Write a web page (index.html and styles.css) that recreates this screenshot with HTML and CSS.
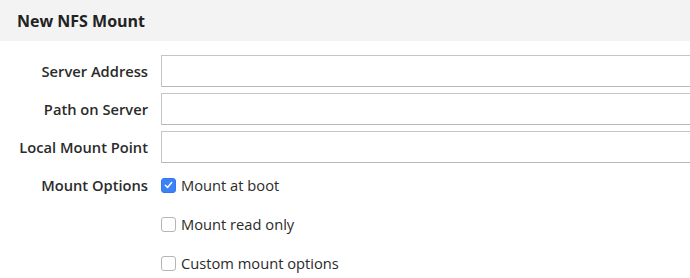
FILE: index.html
```html
<!DOCTYPE html>
<html lang="en">
<head>
    <meta charset="UTF-8">
    <meta name="viewport" content="width=device-width, initial-scale=1.0">
    <title>New NFS Mount</title>
    <link rel="stylesheet" href="styles.css">
</head>
<body>
    <header class="dialog-header">
        <h1>New NFS Mount</h1>
    </header>
    <form class="mount-form">
        <label class="field-label" for="server">Server Address</label>
        <input class="text-input" type="text" id="server">

        <label class="field-label" for="path">Path on Server</label>
        <input class="text-input" type="text" id="path">

        <label class="field-label" for="local">Local Mount Point</label>
        <input class="text-input" type="text" id="local">

        <span class="field-label options-label">Mount Options</span>
        <div class="options">
            <label class="check-row">
                <span class="check checked">
                    <svg viewBox="0 0 14 14" width="14" height="14"><path d="M3.6 7.3 L6 9.6 L10.4 4.4" fill="none" stroke="#fff" stroke-width="1.6" stroke-linecap="round" stroke-linejoin="round"/></svg>
                </span>
                Mount at boot
            </label>
            <label class="check-row">
                <span class="check"></span>
                Mount read only
            </label>
            <label class="check-row">
                <span class="check"></span>
                Custom mount options
            </label>
        </div>
    </form>
</body>
</html>
```

FILE: styles.css
```css
body {
    font-family: "Open Sans", sans-serif;
    background: #fff;
    color: #333;
    margin: 0;
    padding: 0;
    overflow: hidden;
}

.dialog-header {
    background: #f3f3f3;
    height: 41px;
    padding-left: 17px;
    display: flex;
    align-items: center;
}

.dialog-header h1 {
    margin: 0;
    font-size: 16px;
    font-weight: 700;
    color: #222;
}

.mount-form {
    display: grid;
    grid-template-columns: 148px 1fr;
    column-gap: 13px;
    row-gap: 6px;
    padding-top: 14px;
}

.field-label {
    font-size: 14.7px;
    font-weight: 600;
    color: #2b2b2b;
    text-align: right;
    align-self: center;
}

.options-label {
    align-self: start;
    line-height: 20px;
    margin-top: 6px;
}

.text-input {
    height: 32px;
    box-sizing: border-box;
    border: 1px solid #c4c4c4;
    border-bottom-color: #b8b8b8;
    border-right: none;
    border-radius: 0;
    padding: 0 8px;
    font: inherit;
    margin: 0;
}

.options {
    margin-top: 6px;
    display: flex;
    flex-direction: column;
    gap: 19px;
}

.check-row {
    display: flex;
    align-items: center;
    gap: 5px;
    font-size: 14.7px;
    line-height: 20px;
    color: #2b2b2b;
}

.check {
    width: 15px;
    height: 15px;
    box-sizing: border-box;
    border: 1px solid #b5b5b5;
    border-radius: 3px;
    background: #fff;
    display: flex;
    align-items: center;
    justify-content: center;
}

.check.checked {
    background: #3b82f6;
    border-color: #3478f0;
}
```
